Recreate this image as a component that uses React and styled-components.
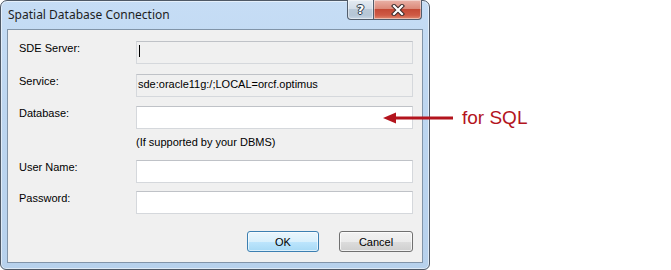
import React from "react";
import styled, { createGlobalStyle } from "styled-components";

const Global = createGlobalStyle`
  html, body { margin: 0; padding: 0; background: #ffffff; }
  body { font-family: "Liberation Sans", Arial, sans-serif; }
`;

const Page = styled.div`
  position: relative;
  width: 671px;
  height: 270px;
  display: flex;
  align-items: flex-start;
`;

const Window = styled.div`
  box-sizing: border-box;
  width: 430px;
  height: 270px;
  border: 1px solid #4f5966;
  border-radius: 7px 7px 6px 6px;
  background: linear-gradient(180deg, #c6ddf5 0%, #bdd6f0 40%, #b7d1ec 100%);
  box-shadow: inset 0 0 0 1px rgba(255, 255, 255, 0.55);
  display: flex;
  flex-direction: column;
`;

const TitleBar = styled.div`
  height: 28px;
  display: flex;
  align-items: flex-start;
  padding-left: 7px;
  padding-right: 7px;
`;

const Title = styled.div`
  font-family: "Noto Sans", "Open Sans", sans-serif;
  font-size: 12px;
  line-height: 16px;
  color: #1e1e1e;
  margin-top: 6px;
`;

const CaptionButtons = styled.div`
  margin-left: auto;
  display: flex;
  margin-top: -1px;
`;

const CaptionButton = styled.div`
  box-sizing: border-box;
  height: 20px;
  width: ${(p) => p.$w}px;
  display: flex;
  align-items: center;
  justify-content: center;
  border: 1px solid #515d6c;
  border-top: none;
  border-radius: ${(p) => (p.$close ? "0 0 4px 0" : "0 0 0 4px")};
  border-left: ${(p) => (p.$close ? "none" : "1px solid #515d6c")};
  background: ${(p) =>
    p.$close
      ? "linear-gradient(180deg, #e9b2a8 0%, #dc8a7a 45%, #c44a36 50%, #cf5a45 80%, #e08a70 100%)"
      : "linear-gradient(180deg, #e4ebf2 0%, #d3dde8 45%, #bac9d8 50%, #b5c6d6 80%, #c8d7e6 100%)"};
  box-shadow: inset 0 0 0 1px rgba(255, 255, 255, 0.45);
`;

const Question = styled.span`
  font-family: "DejaVu Sans", sans-serif;
  font-weight: bold;
  font-size: 13px;
  line-height: 13px;
  color: #ffffff;
  text-shadow: 0 0 1px #2d3a4a, 1px 0 0 #2d3a4a, -1px 0 0 #2d3a4a, 0 1px 0 #2d3a4a, 0 -1px 0 #2d3a4a;
`;

const Client = styled.div`
  flex: 1;
  margin: 0 6px 6px 6px;
  border: 1px solid #8194a8;
  background: #f0f0f0;
  padding: 11px 9px 0 11px;
  display: flex;
  flex-direction: column;
`;

const Row = styled.div`
  display: grid;
  grid-template-columns: 117px 277px;
  align-items: center;
  margin-top: ${(p) => p.$mt || 0}px;
`;

const Label = styled.div`
  font-size: 11px;
  color: #000;
  line-height: 13px;
  margin-bottom: 9px;
`;

const Field = styled.div`
  box-sizing: border-box;
  height: 23px;
  border: 1px solid #d5d8dc;
  border-top-color: #bfc2c7;
  background: ${(p) => (p.$readOnly ? "#f0f0f0" : "#ffffff")};
  display: flex;
  align-items: center;
  padding-left: 1px;
  padding-bottom: 3px;
  font-size: 11px;
  color: #000;
`;

const Caret = styled.span`
  display: block;
  width: 1px;
  height: 12px;
  background: #000;
  margin-left: 1px;
`;

const Hint = styled.div`
  font-size: 11px;
  color: #000;
  line-height: 13px;
  grid-column: 2;
  margin-top: 7px;
`;

const Footer = styled.div`
  display: flex;
  justify-content: flex-end;
  gap: 20px;
  margin-top: 17px;
`;

const Button = styled.button`
  box-sizing: border-box;
  width: ${(p) => p.$w}px;
  height: 21px;
  padding: 0;
  font-family: "Liberation Sans", Arial, sans-serif;
  font-size: 11px;
  color: #000;
  border-radius: 3px;
  border: 1px solid ${(p) => (p.$default ? "#3c7fb1" : "#707070")};
  background: ${(p) =>
    p.$default
      ? "linear-gradient(180deg, #eaf6fd 0%, #d9f0fc 50%, #bee6fd 50%, #a7d9f5 100%)"
      : "linear-gradient(180deg, #f2f2f2 0%, #ebebeb 50%, #dddddd 50%, #cfcfcf 100%)"};
  box-shadow: inset 0 0 0 1px ${(p) => (p.$default ? "rgba(255,255,255,0.6)" : "rgba(255,255,255,0.7)")};
`;

const Annotation = styled.div`
  position: absolute;
  left: 383px;
  top: 106px;
  display: flex;
  align-items: center;
  gap: 9px;
`;

const Note = styled.span`
  font-family: "Liberation Sans", Arial, sans-serif;
  font-size: 19px;
  line-height: 22px;
  color: #b3141d;
`;

export default function App() {
  return (
    <>
      <Global />
      <Page>
        <Window>
          <TitleBar>
            <Title>Spatial Database Connection</Title>
            <CaptionButtons>
              <CaptionButton $w={27}>
                <Question>?</Question>
              </CaptionButton>
              <CaptionButton $w={48} $close>
                <svg width="14" height="12" viewBox="0 0 14 12">
                  <path d="M3 2 L11 10 M11 2 L3 10" stroke="#3a2a2a" strokeWidth="4.2" strokeLinecap="square" />
                  <path d="M3 2 L11 10 M11 2 L3 10" stroke="#ffffff" strokeWidth="2.2" strokeLinecap="square" />
                </svg>
              </CaptionButton>
            </CaptionButtons>
          </TitleBar>
          <Client>
            <Row>
              <Label>SDE Server:</Label>
              <Field $readOnly>
                <Caret />
              </Field>
            </Row>
            <Row $mt={10}>
              <Label>Service:</Label>
              <Field $readOnly>sde:oracle11g:/;LOCAL=orcf.optimus</Field>
            </Row>
            <Row $mt={9}>
              <Label>Database:</Label>
              <Field />
              <Hint>(If supported by your DBMS)</Hint>
            </Row>
            <Row $mt={11}>
              <Label>User Name:</Label>
              <Field />
            </Row>
            <Row $mt={8}>
              <Label>Password:</Label>
              <Field />
            </Row>
            <Footer>
              <Button $w={72} $default>OK</Button>
              <Button $w={74}>Cancel</Button>
            </Footer>
          </Client>
        </Window>
        <Annotation>
          <svg width="70" height="24" viewBox="0 0 70 24">
            <path d="M0 12 L13 6.5 L13 17.5 Z" fill="#b3141d" />
            <rect x="12" y="10.5" width="58" height="3" fill="#b3141d" />
          </svg>
          <Note>for SQL</Note>
        </Annotation>
      </Page>
    </>
  );
}
